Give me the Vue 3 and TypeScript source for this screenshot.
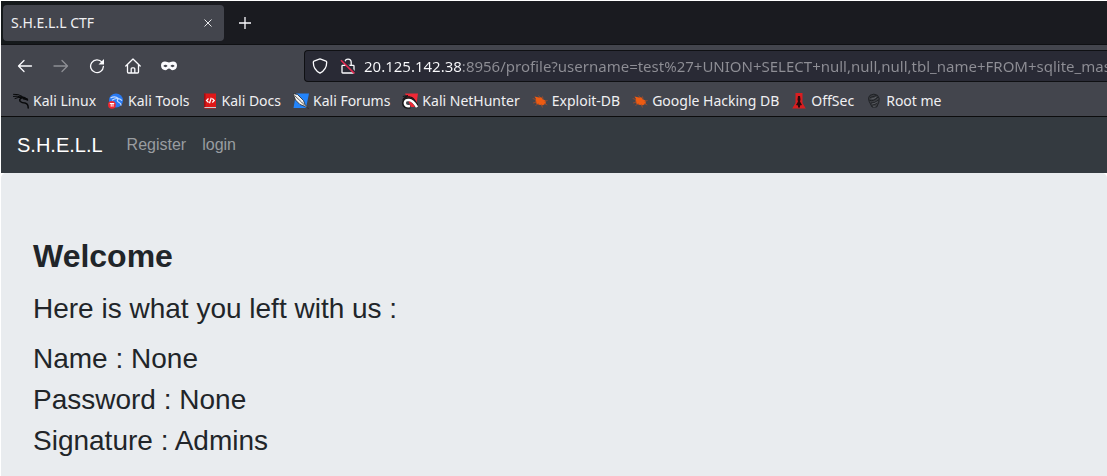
<script setup lang="ts">
import { ref } from 'vue'

interface Bookmark {
  label: string
  icon: string
}

const address = ref('20.125.142.38:8956/profile?username=test%27+UNION+SELECT+null,null,null,tbl_name+FROM+sqlite_mas')

const bookmarks: Bookmark[] = [
  { label: 'Kali Linux', icon: 'dragon' },
  { label: 'Kali Tools', icon: 'tools' },
  { label: 'Kali Docs', icon: 'docs' },
  { label: 'Kali Forums', icon: 'forums' },
  { label: 'Kali NetHunter', icon: 'nethunter' },
  { label: 'Exploit-DB', icon: 'bug' },
  { label: 'Google Hacking DB', icon: 'bug' },
  { label: 'OffSec', icon: 'offsec' },
  { label: 'Root me', icon: 'skull' },
]

const details = [
  { name: 'Name', value: 'None' },
  { name: 'Password', value: 'None' },
  { name: 'Signature', value: 'Admins' },
]
</script>

<template>
  <div class="window">
    <header class="chrome">
      <div class="tabs">
        <div class="tab">
          <span class="tab-title">S.H.E.L.L CTF</span>
          <button class="tab-close" type="button" aria-label="Close tab">
            <svg width="8" height="8" viewBox="0 0 8 8"><path d="M.5.5l7 7M7.5.5l-7 7" stroke="#e8e8ea" fill="none" /></svg>
          </button>
        </div>
        <button class="tab-new" type="button" aria-label="New tab">
          <svg width="12" height="12" viewBox="0 0 12 12"><path d="M6 0v12M0 6h12" stroke="#fbfbfe" stroke-width="1.3" fill="none" /></svg>
        </button>
      </div>

      <div class="toolbar">
        <button class="tool" type="button" aria-label="Back">
          <svg width="16" height="16" viewBox="0 0 16 16"><path d="M14.500 8H1.800M7 2.500L1.500 8 7 13.500" class="line" /></svg>
        </button>
        <button class="tool" type="button" aria-label="Forward" disabled>
          <svg width="16" height="16" viewBox="0 0 16 16"><path d="M1 8h13.200M9 2.500L14.500 8 9 13.500" class="line" /></svg>
        </button>
        <button class="tool" type="button" aria-label="Reload">
          <svg width="16" height="16" viewBox="0 0 16 16">
            <path d="M13 4.200A6.400 6.400 0 1 0 14.400 8.500" class="line" />
            <path d="M15 1v5.500H9.500z" fill="#fbfbfe" />
          </svg>
        </button>
        <button class="tool" type="button" aria-label="Home">
          <svg width="16" height="16" viewBox="0 0 16 16">
            <path d="M.8 8L8 1l7.200 7M2.500 6.600V14q0 1 1 1h9q1 0 1-1V6.600M6.200 15v-4.200q0-1 1-1h1.600q1 0 1 1V15" class="line" />
          </svg>
        </button>
        <button class="tool" type="button" aria-label="Private mask">
          <svg width="16" height="16" viewBox="0 0 16 16">
            <path fill="#fbfbfe" fill-rule="evenodd" d="M4 3.500C1.500 3.500 0 5 0 7.600 0 10.500 2 12.300 4.300 12.300c1.800 0 2.500-1.700 3.700-1.700s1.900 1.700 3.700 1.700C14 12.300 16 10.500 16 7.600c0-2.600-1.500-4.100-4-4.100-2 0-2.800 1-4 1s-2-1-4-1zM2.300 8.100q2.200-2.600 4.300 0-2.100 2.200-4.300 0zm7.100 0q2.100-2.600 4.300 0-2.200 2.200-4.300 0z" />
          </svg>
        </button>
        <div class="urlbar">
          <svg width="16" height="16" viewBox="0 0 16 16">
            <path d="M8 .9l6 2.300q.7.300.7 1C14.700 9 12 13 8 15.100 4 13 1.300 9 1.300 4.200q0-.7.7-1z" class="line" />
          </svg>
          <svg width="16" height="16" viewBox="0 0 16 16">
            <path d="M4.800 7V4.300a3.200 3.200 0 0 1 6.400 0V7M2.700 7.300h10.600q.7 0 .7.700v6.300q0 .7-.7.700H2.700q-.7 0-.7-.7V8q0-.7.7-.7z" class="line" />
            <path d="M2 1.500L15 14.500" stroke="#292a35" stroke-width="2" />
            <path d="M1 2.200L14.300 15.400" stroke="#e22850" stroke-width="1.600" />
          </svg>
          <input v-model="address" class="address" type="text" aria-label="Address" spellcheck="false" />
        </div>
      </div>

      <nav class="bookmarks" aria-label="Bookmarks">
        <a v-for="b in bookmarks" :key="b.label" class="bookmark" href="#">
          <svg width="16" height="16" viewBox="0 0 16 16">
            <g v-if="b.icon === 'dragon'" fill="none" stroke="#08090b" stroke-linecap="round">
              <path d="M.5 1.300Q5 .8 9 3.200M.5 3.400Q4 2.600 8 4M2 5.500Q5 4 8.500 4.400" stroke-width="1" />
              <path d="M8 3.800Q12 4.200 14.500 7M9.500 4.500Q5.500 6 7.300 8.500 9 9.800 12 10q3.300.7 3.200 5" stroke-width="1.500" />
              <path d="M10.500 5.500l3.500.8" stroke-width="2" />
            </g>
            <g v-else-if="b.icon === 'tools'">
              <circle cx="8" cy="7.500" r="7" fill="#2879f2" />
              <path d="M2.500 5Q7 2.500 10.300 5.500M4 7.300q3.500-2.500 6.300-1.500Q8 8 10.800 9.200 13 10 13.200 12.500M10.500 5.700q2 .2 3.500 2" stroke="#c5dcff" stroke-width="1.200" fill="none" />
              <circle cx="3.900" cy="11.800" r="3.900" fill="#ed2731" />
              <path d="M1.800 10.500h4.400M3.200 10.500v3.200M5 10.500v3.200" stroke="#fff" stroke-width="1" fill="none" />
            </g>
            <g v-else-if="b.icon === 'docs'">
              <path d="M2 .5h12V15.500H3Q2 15.500 2 14.500z" fill="#df1717" />
              <path d="M2 .5h1.500V14H2z" fill="#991115" />
              <path d="M2.500 14.500H14" stroke="#c6cbd0" />
              <path d="M6.500 5.500l-2 2 2 2M10.300 5.500l2 2-2 2M9.300 4.700L7.500 10.300" stroke="#fff" stroke-width="1.200" fill="none" />
            </g>
            <g v-else-if="b.icon === 'forums'">
              <path d="M3 .5h13L13 15H.5z" fill="#2384fa" />
              <path d="M0 .5l4.500 1 6 6 1.500 4 3.500 4-4.500-2.500-4-1.500L2.500 7z" fill="#f3f2ef" stroke="#24272b" stroke-width=".8" />
              <path d="M1.500 2.500l7 6.500M8.500 9l3.500 3.500" stroke="#343536" stroke-width=".8" />
            </g>
            <g v-else-if="b.icon === 'nethunter'">
              <path d="M3 .5h13L14 14H9z" fill="#ef2836" />
              <path d="M.8 3.500L6 2.500M.8 7Q3 2.500 8.500 4q3 .6 4.500 4" stroke="#171719" stroke-width="1.200" fill="none" />
              <path d="M8.200 13.500Q2 14.500 2 10.200 2.200 6 7 6.300q4.500.3 8 7.200" stroke="#171719" stroke-width="4" fill="none" />
              <path d="M8 13Q2.800 13.800 2.800 10 3 6.700 7 7q4 .3 8 7" stroke="#fff" stroke-width="2.500" fill="none" />
            </g>
            <g v-else-if="b.icon === 'bug'">
              <path d="M2.500 3.500L7 4.500 9 4l1.800 2.200 2.700 1.300.3 3-2.800 1.800-3-.2-3.500-1.300L3.500 8 4 6z" fill="#ee5b12" />
              <path d="M.7 5.500l3.500 1.200M1 10l4-1M3.500 12.500l3-2M6.500 2.500L8.500 5M10.500 3.500l.5 3M15.500 7.500l-3 .8M15.300 12l-3-1.500M10.500 14.500L9 11" stroke="#a44c2a" stroke-width=".8" fill="none" />
            </g>
            <g v-else-if="b.icon === 'offsec'">
              <path d="M4.500 0h7v10l3.300 5.500H1.200l3.300-5.500z" fill="#d91d20" />
              <path d="M7 3h2l.5 3.500L9 8.500l2 3.500-2 .5v2H7v-2L5 12l2-3.500-.5-2z" fill="#2b0b0d" />
            </g>
            <g v-else fill="none" stroke="#1b1d20" stroke-width=".9">
              <path d="M4 2.300Q8 0 11.500 2.300q2.700 2.700 1.300 7L10.700 14H6L4.500 11Q1 5.500 4 2.300z" fill="#3c3e43" />
              <path d="M4 4.500l6.500-2M3.500 7.300q4 1.500 8.500-3.300M5 10q3 .8 7.500-3M6 12q3 .3 5-2.200" />
              <path d="M5.500 5.700q2.500.5 4.500-1.500M6 11q3-.2 5.500-2.300M7 13.300h2.500" stroke="#70737a" stroke-width=".6" />
            </g>
          </svg>
          <span>{{ b.label }}</span>
        </a>
      </nav>
    </header>

    <nav class="navbar" aria-label="Site">
      <a class="brand" href="#">S.H.E.L.L</a>
      <a class="nav-link" href="#">Register</a>
      <a class="nav-link" href="#">login</a>
    </nav>

    <div class="page">
      <main class="jumbotron">
        <h1>Welcome</h1>
        <h2>Here is what you left with us :</h2>
        <p v-for="d in details" :key="d.name">{{ d.name }} : {{ d.value }}</p>
      </main>
    </div>
  </div>
</template>

<style>
body {
  margin: 0;
  background: #fff;
}
</style>

<style scoped>
.window {
  display: flex;
  flex-direction: column;
  min-height: 100vh;
  box-sizing: border-box;
  padding: 1px 0 0 1px;
  overflow: hidden;
  font-family: "Liberation Sans", Arial, sans-serif;
}

button {
  display: flex;
  align-items: center;
  justify-content: center;
  padding: 0;
  border: 0;
  background: none;
}

a {
  text-decoration: none;
}

svg {
  flex: none;
}

.chrome {
  background: #43454d;
  border-bottom: 1px solid #0c0c0d;
  color: #f0f0f2;
  font: 14px/20px "Noto Sans", sans-serif;
}

.tabs {
  display: flex;
  align-items: center;
  height: 43px;
  padding-left: 2px;
  background: linear-gradient(90deg, #15191b, #1a1b20 220px);
  border-bottom: 1px solid #0f1013;
}

.tab {
  display: flex;
  align-items: center;
  justify-content: space-between;
  box-sizing: border-box;
  width: 221px;
  height: 36px;
  padding: 0 4px 0 8px;
  border-radius: 4px;
  background: #43454d;
}

.tab-close {
  width: 24px;
  height: 24px;
}

.tab-new {
  width: 36px;
  height: 36px;
  margin-left: 3px;
}

.toolbar {
  display: flex;
  align-items: center;
  height: 41px;
  padding-left: 6px;
}

.tool {
  width: 36px;
  height: 36px;
}

.tool:disabled {
  opacity: 0.4;
}

.line {
  fill: none;
  stroke: #fbfbfe;
  stroke-width: 1.3;
  stroke-linecap: round;
  stroke-linejoin: round;
}

.urlbar {
  display: flex;
  flex: 1;
  align-items: center;
  gap: 12px;
  box-sizing: border-box;
  height: 32px;
  margin-left: 117px;
  padding-left: 7px;
  border: 1px solid #0f1013;
  border-right: 0;
  border-radius: 4px 0 0 4px;
  background: #292a35;
}

.address {
  flex: 1;
  min-width: 0;
  height: 24px;
  margin-left: -4px;
  padding: 0;
  border: 0;
  outline: 0;
  background: linear-gradient(90deg, #fbfbfe 98px, #8e8e95 98px);
  background-clip: text;
  -webkit-background-clip: text;
  -webkit-text-fill-color: transparent;
  font: inherit;
  font-size: 15px;
}

.bookmarks {
  display: flex;
  align-items: center;
  gap: 12px;
  height: 30px;
  padding-left: 12px;
}

.bookmark {
  display: flex;
  align-items: center;
  gap: 4px;
  color: inherit;
  white-space: nowrap;
}

.navbar {
  display: flex;
  align-items: center;
  gap: 16px;
  height: 56px;
  padding: 0 16px;
  background: #343a40;
}

.brand {
  margin-right: 8px;
  color: #fff;
  font-size: 20px;
  line-height: 30px;
}

.nav-link {
  color: #999da0;
  font-size: 16px;
  line-height: 24px;
}

.page {
  display: flex;
  flex: 1;
  background: #fff;
}

.jumbotron {
  flex: 1;
  padding: 64px 32px 8px;
  border-radius: 5px 5px 0 0;
  background: #e9ecef;
  color: #212529;
}

h1 {
  margin: 0 0 17px;
  font-size: 32px;
  line-height: 38px;
}

h2 {
  margin: 0 0 16px;
  font-size: 28px;
  font-weight: 400;
  line-height: 34px;
}

p {
  margin: 0 0 7px;
  font-size: 28px;
  line-height: 34px;
}
</style>
